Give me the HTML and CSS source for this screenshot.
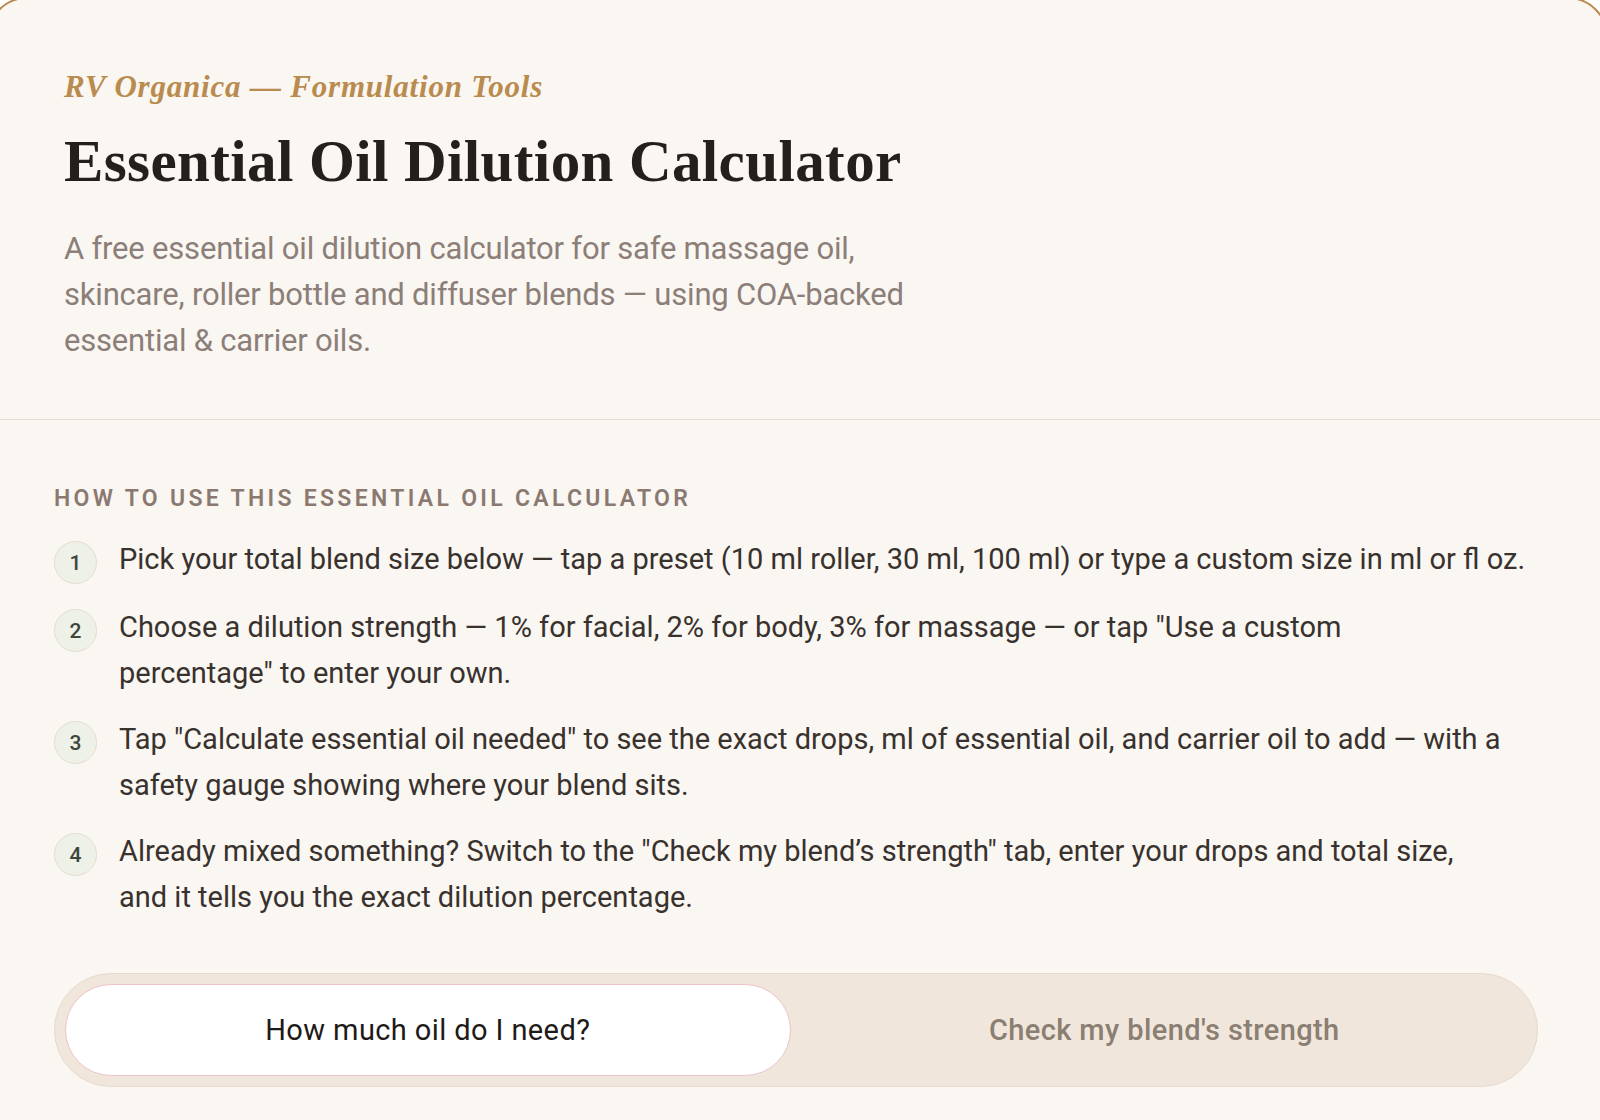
FILE: index.html
```html
<!DOCTYPE html>
<html lang="en">
<head>
	<meta charset="UTF-8">
	<meta name="viewport" content="width=device-width, initial-scale=1">
	<title>Essential Oil Dilution Calculator</title>
	<link rel="stylesheet" href="styles.css">
</head>
<body>
	<div class="card">
		<header class="intro">
			<p class="eyebrow">RV Organica — Formulation Tools</p>
			<h1>Essential Oil Dilution Calculator</h1>
			<p class="lead">A free essential oil dilution calculator for safe massage oil, skincare, roller bottle and diffuser blends — using COA-backed essential &amp; carrier oils.</p>
		</header>

		<section class="how-to">
			<h2>How to use this essential oil calculator</h2>
			<ol class="steps">
				<li>
					<span class="step-num">1</span>
					<p>Pick your total blend size below — tap a preset (10 ml roller, 30 ml, 100 ml) or type a custom size in ml or fl oz.</p>
				</li>
				<li>
					<span class="step-num">2</span>
					<p>Choose a dilution strength — 1% for facial, 2% for body, 3% for massage — or tap "Use a custom<br>percentage" to enter your own.</p>
				</li>
				<li>
					<span class="step-num">3</span>
					<p>Tap "Calculate essential oil needed" to see the exact drops, ml of essential oil, and carrier oil to add — with a safety gauge showing where your blend sits.</p>
				</li>
				<li>
					<span class="step-num">4</span>
					<p>Already mixed something? Switch to the "Check my blend’s strength" tab, enter your drops and total size,<br>and it tells you the exact dilution percentage.</p>
				</li>
			</ol>

			<div class="tabs">
				<button class="tab active" type="button">How much oil do I need?</button>
				<button class="tab" type="button">Check my blend's strength</button>
			</div>
		</section>
	</div>
</body>
</html>
```

FILE: styles.css
```css
/* reset */
* {
	box-sizing: border-box;
	margin: 0;
	padding: 0;
}

body {
	background: #fff;
	font-family: Roboto, "Liberation Sans", sans-serif;
	overflow: hidden;
	min-height: 100vh;
}

.card {
	width: 1621px;
	margin: -3px 0 0 -13px;
	min-height: 1200px;
	background: #faf6f1;
	border: 2px solid #b98b4e;
	border-radius: 40px;
}

.intro {
	padding: 70px 76px 55px 75px;
	border-bottom: 1px solid #e3dbd3;
}

.eyebrow {
	font-family: "Liberation Serif", serif;
	font-style: italic;
	font-weight: 700;
	font-size: 31px;
	letter-spacing: 0.8px;
	color: #b98b4e;
	line-height: 36px;
}

h1 {
	font-family: "Liberation Serif", serif;
	font-weight: 700;
	font-size: 59px;
	line-height: 72px;
	letter-spacing: 0.4px;
	color: #231f1c;
	margin-top: 20px;
}

.lead {
	max-width: 870px;
	margin-top: 29px;
	font-size: 31px;
	line-height: 46px;
	letter-spacing: -0.2px;
	color: #8c7e78;
}

.how-to {
	padding: 64px 65px 60px;
}

h2 {
	font-size: 23px;
	font-weight: 600;
	line-height: 30px;
	letter-spacing: 3.3px;
	text-transform: uppercase;
	color: #8a7970;
}

.steps {
	list-style: none;
	margin-top: 22px;
	display: flex;
	flex-direction: column;
	gap: 20px;
}

.steps li {
	display: flex;
	align-items: flex-start;
	gap: 22px;
}

.step-num {
	flex: 0 0 43px;
	height: 43px;
	margin-top: 5px;
	border-radius: 50%;
	background: #eef1e8;
	border: 1.5px solid #e6dccf;
	display: flex;
	align-items: center;
	justify-content: center;
	font-size: 21px;
	font-weight: 500;
	color: #3d463a;
}

.steps p {
	font-size: 29px;
	line-height: 46px;
	color: #38312d;
}

.tabs {
	margin-top: 53px;
	width: 1484px;
	display: grid;
	grid-template-columns: 1fr 1fr;
	gap: 11px;
	padding: 10px;
	background: #f1e6db;
	border: 1px solid #e6dacd;
	border-radius: 60px;
}

.tab {
	height: 92px;
	border: 1px solid transparent;
	border-radius: 46px;
	background: none;
	font-family: inherit;
	font-size: 29px;
	letter-spacing: 0.4px;
	font-weight: 500;
	color: #8b7e72;
	cursor: pointer;
}

.tab.active {
	background: #fff;
	border-color: #ebc3c8;
	color: #1e1a18;
	font-weight: 400;
}
```
